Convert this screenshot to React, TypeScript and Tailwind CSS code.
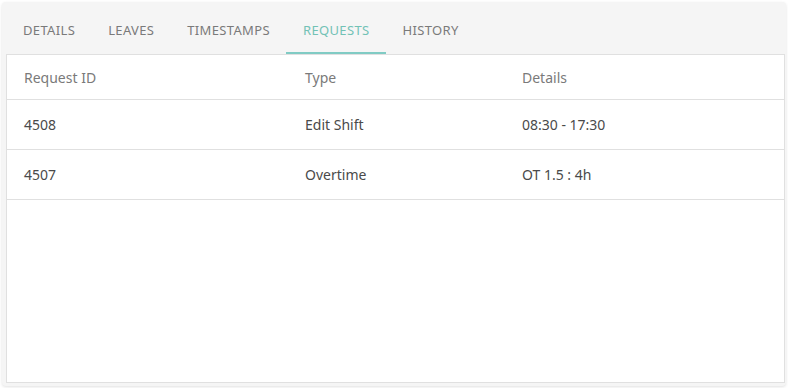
import React from "react";

const tabs = ["DETAILS", "LEAVES", "TIMESTAMPS", "REQUESTS", "HISTORY"];
const rows = [
  { id: "4508", type: "Edit Shift", details: "08:30 - 17:30" },
  { id: "4507", type: "Overtime", details: "OT 1.5 : 4h" },
];

export default function App() {
  return (
    <div className="w-[788px] h-[388px] bg-white p-[2px]" style={{ fontFamily: '"Noto Sans", "Open Sans", sans-serif' }}>
      <div className="w-full h-full rounded-[4px] bg-[#f5f5f5] shadow-[0_1px_3px_rgba(0,0,0,0.12)] flex flex-col pl-[4px] pr-[0px] pb-[3px]">
        <div className="flex h-[52px] pl-[0.5px] items-stretch">
          {tabs.map((t) => {
            const active = t === "REQUESTS";
            return (
              <div
                key={t}
                className={
                  "px-[16.5px] flex items-center text-[13px] tracking-[0.35px] pt-[8px] border-b-2 " +
                  (active ? "text-[#72c2b5] border-[#80cbc4]" : "text-[#7a7a7a] border-transparent")
                }
              >
                {t}
              </div>
            );
          })}
        </div>
        <div className="flex-1 bg-white border border-[#e0e0e0] mr-[1px]">
          <div className="grid grid-cols-[281px_217px_1fr] h-[45px] items-center border-b border-[#e0e0e0] text-[14px] text-[#7a7a7a] pl-[17px] pt-[1px]">
            <div>Request ID</div>
            <div>Type</div>
            <div>Details</div>
          </div>
          {rows.map((r) => (
            <div
              key={r.id}
              className="grid grid-cols-[281px_217px_1fr] h-[50px] items-center border-b border-[#e0e0e0] text-[14px] text-[#4a4a4a] pl-[17px]"
            >
              <div>{r.id}</div>
              <div>{r.type}</div>
              <div>{r.details}</div>
            </div>
          ))}
        </div>
      </div>
    </div>
  );
}
